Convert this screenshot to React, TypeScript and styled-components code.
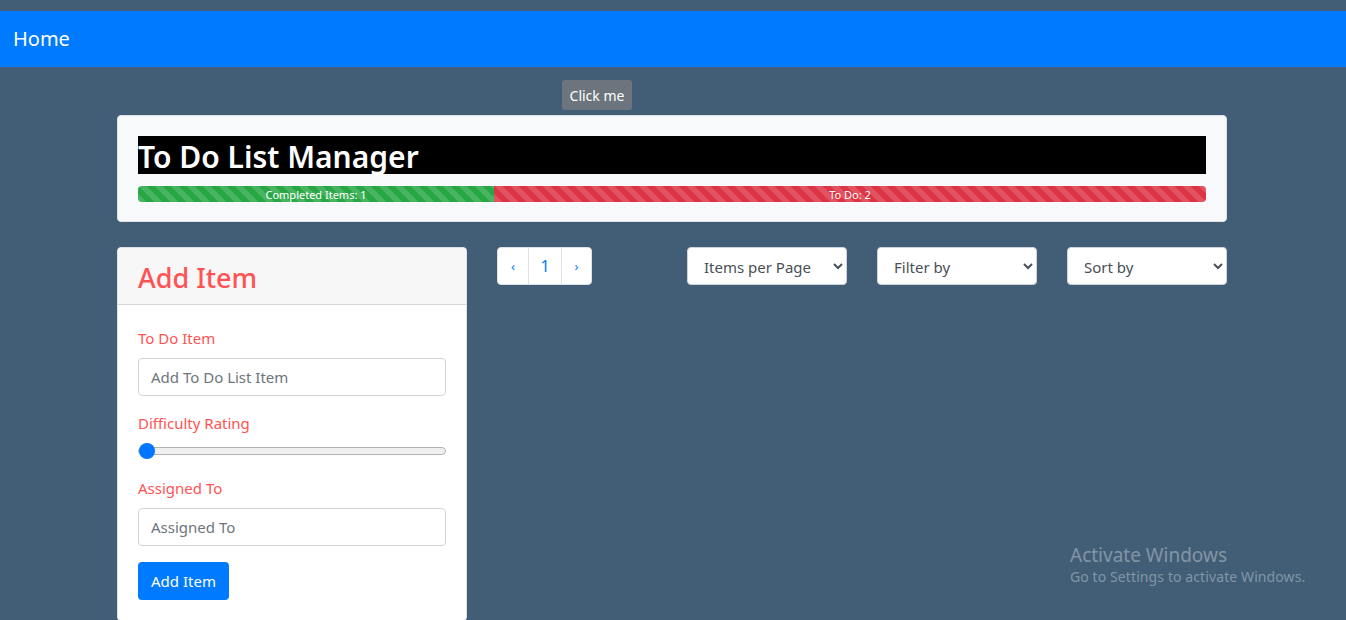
import React from "react";
import styled, { createGlobalStyle } from "styled-components";

const GlobalStyle = createGlobalStyle`
  * {
    box-sizing: border-box;
  }
  body {
    margin: 0;
    background-color: #425e77;
    font-family: "Noto Sans", "Open Sans", Arial, sans-serif;
    font-size: 16px;
    color: #212529;
  }
`;

const App = () => {
  const completed = 1;
  const todo = 2;
  const donePct = (completed / (completed + todo)) * 100;

  return (
    <>
      <GlobalStyle />
      <Page>
        <TopStrip />
        <Navbar>
          <Brand>Home</Brand>
        </Navbar>
        <Container>
          <ClickRow>
            <ClickButton>Click me</ClickButton>
          </ClickRow>
          <HeaderCard>
            <Title>To Do List Manager</Title>
            <Progress>
              <Bar color="#28a745" style={{ width: `${donePct}%` }}>
                Completed Items: {completed}
              </Bar>
              <Bar color="#dc3545" style={{ width: `${100 - donePct}%` }}>
                To Do: {todo}
              </Bar>
            </Progress>
          </HeaderCard>
          <Main>
            <FormCard>
              <FormHeader>
                <h2>Add Item</h2>
              </FormHeader>
              <FormBody>
                <Label>To Do Item</Label>
                <Input placeholder="Add To Do List Item" />
                <Label>Difficulty Rating</Label>
                <Range type="range" min={1} max={5} defaultValue={1} />
                <Label>Assigned To</Label>
                <Input placeholder="Assigned To" />
                <SubmitButton>Add Item</SubmitButton>
              </FormBody>
            </FormCard>
            <Toolbar>
              <Pagination>
                <PageCell small>‹</PageCell>
                <PageCell>1</PageCell>
                <PageCell small>›</PageCell>
              </Pagination>
              <Selects>
                <Select defaultValue="">
                  <option value="">Items per Page</option>
                </Select>
                <Select defaultValue="">
                  <option value="">Filter by</option>
                </Select>
                <Select defaultValue="">
                  <option value="">Sort by</option>
                </Select>
              </Selects>
            </Toolbar>
          </Main>
        </Container>
        <Watermark>
          <h3>Activate Windows</h3>
          <p>Go to Settings to activate Windows.</p>
        </Watermark>
      </Page>
    </>
  );
};

export default App;

const Page = styled.div`
  width: 100%;
  min-height: 620px;
  position: relative;
  overflow: hidden;
`;

const TopStrip = styled.div`
  height: 11px;
`;

const Navbar = styled.nav`
  height: 56px;
  background-color: #007bff;
  display: flex;
  align-items: center;
  padding-left: 13px;
`;

const Brand = styled.span`
  color: #fff;
  font-size: 20px;
  line-height: 1;
`;

const Container = styled.div`
  width: 1110px;
  margin-left: 117px;
`;

const ClickRow = styled.div`
  display: flex;
  padding-left: 445px;
  margin-top: 13px;
`;

const ClickButton = styled.button`
  height: 30px;
  width: 70px;
  padding: 0;
  border: none;
  border-radius: 3px;
  background-color: #6c757d;
  color: #fff;
  font-family: inherit;
  font-size: 14px;
`;

const HeaderCard = styled.div`
  margin-top: 5px;
  background-color: #f8f9fa;
  border: 1px solid #dee2e6;
  border-radius: 4px;
  padding: 20px 20px 19px 20px;
`;

const Title = styled.h1`
  margin: 0;
  height: 38px;
  background-color: #000;
  color: #fff;
  font-size: 30px;
  font-weight: 600;
  line-height: 41px;
  letter-spacing: 0;
`;

const Progress = styled.div`
  margin-top: 12px;
  height: 16px;
  display: flex;
  border-radius: 4px;
  overflow: hidden;
  background-color: #e9ecef;
`;

const Bar = styled.div<{ color: string }>`
  height: 100%;
  display: flex;
  align-items: center;
  justify-content: center;
  color: #fff;
  font-size: 11px;
  background-color: ${(p) => p.color};
  background-image: linear-gradient(
    45deg,
    rgba(255, 255, 255, 0.15) 25%,
    transparent 25%,
    transparent 50%,
    rgba(255, 255, 255, 0.15) 50%,
    rgba(255, 255, 255, 0.15) 75%,
    transparent 75%,
    transparent
  );
  background-size: 16px 16px;
`;

const Main = styled.div`
  margin-top: 25px;
  display: flex;
  gap: 30px;
  align-items: flex-start;
`;

const FormCard = styled.div`
  width: 350px;
  flex-shrink: 0;
  background-color: #fff;
  border: 1px solid #dee2e6;
  border-radius: 4px;
  overflow: hidden;
`;

const FormHeader = styled.div`
  height: 57px;
  background-color: #f7f7f7;
  border-bottom: 1px solid #d6d6d6;
  padding: 0 20px;
  display: flex;
  align-items: center;
  h2 {
    margin: 0 0 0 0;
    padding-top: 2px;
    color: #ff5353;
    font-size: 27px;
    font-weight: 500;
  }
`;

const FormBody = styled.div`
  padding: 22px 20px 20px 20px;
  display: flex;
  flex-direction: column;
`;

const Label = styled.label`
  color: #ff5353;
  font-size: 15px;
  line-height: 22px;
  margin-bottom: 9px;
`;

const Input = styled.input`
  width: 308px;
  height: 38px;
  border: 1px solid #ced4da;
  border-radius: 4px;
  padding: 0 12px;
  font-family: inherit;
  font-size: 15px;
  color: #495057;
  margin-bottom: 16px;
  &::placeholder {
    color: #6c757d;
  }
`;

const Range = styled.input`
  -webkit-appearance: none;
  appearance: none;
  width: 308px;
  height: 16px;
  margin: 0 0 18px 0;
  background: transparent;
  &::-webkit-slider-runnable-track {
    height: 8px;
    background: #efefef;
    border: 1px solid #b2b2b2;
    border-radius: 4px;
  }
  &::-webkit-slider-thumb {
    -webkit-appearance: none;
    width: 16px;
    height: 16px;
    border-radius: 50%;
    background: #0075ff;
    margin-top: -5px;
  }
`;

const SubmitButton = styled.button`
  align-self: flex-start;
  height: 38px;
  width: 91px;
  padding: 0;
  border: none;
  border-radius: 4px;
  background-color: #007bff;
  color: #fff;
  font-family: inherit;
  font-size: 15px;
`;

const Toolbar = styled.div`
  flex: 1;
  display: flex;
  justify-content: space-between;
`;

const Pagination = styled.div`
  display: flex;
  height: 38px;
  background: #fff;
  border: 1px solid #dee2e6;
  border-radius: 4px;
  overflow: hidden;
`;

const PageCell = styled.div<{ small?: boolean }>`
  width: ${(p) => (p.small ? "30px" : "33px")};
  display: flex;
  align-items: center;
  justify-content: center;
  color: #007bff;
  font-size: ${(p) => (p.small ? "13px" : "16px")};
  & + & {
    border-left: 1px solid #dee2e6;
  }
`;

const Selects = styled.div`
  display: flex;
  gap: 30px;
`;

const Select = styled.select`
  width: 160px;
  height: 38px;
  border: 1px solid #ced4da;
  border-radius: 4px;
  padding: 2px 8px 0 12px;
  background-color: #fff;
  color: #495057;
  font-family: inherit;
  font-size: 15px;
`;

const Watermark = styled.div`
  position: absolute;
  left: 1070px;
  top: 543px;
  color: rgba(255, 255, 255, 0.35);
  pointer-events: none;
  h3 {
    margin: 0;
    font-size: 19px;
    font-weight: 400;
    line-height: 24px;
  }
  p {
    margin: 0;
    font-size: 14px;
    line-height: 20px;
    letter-spacing: 0.1px;
  }
`;
